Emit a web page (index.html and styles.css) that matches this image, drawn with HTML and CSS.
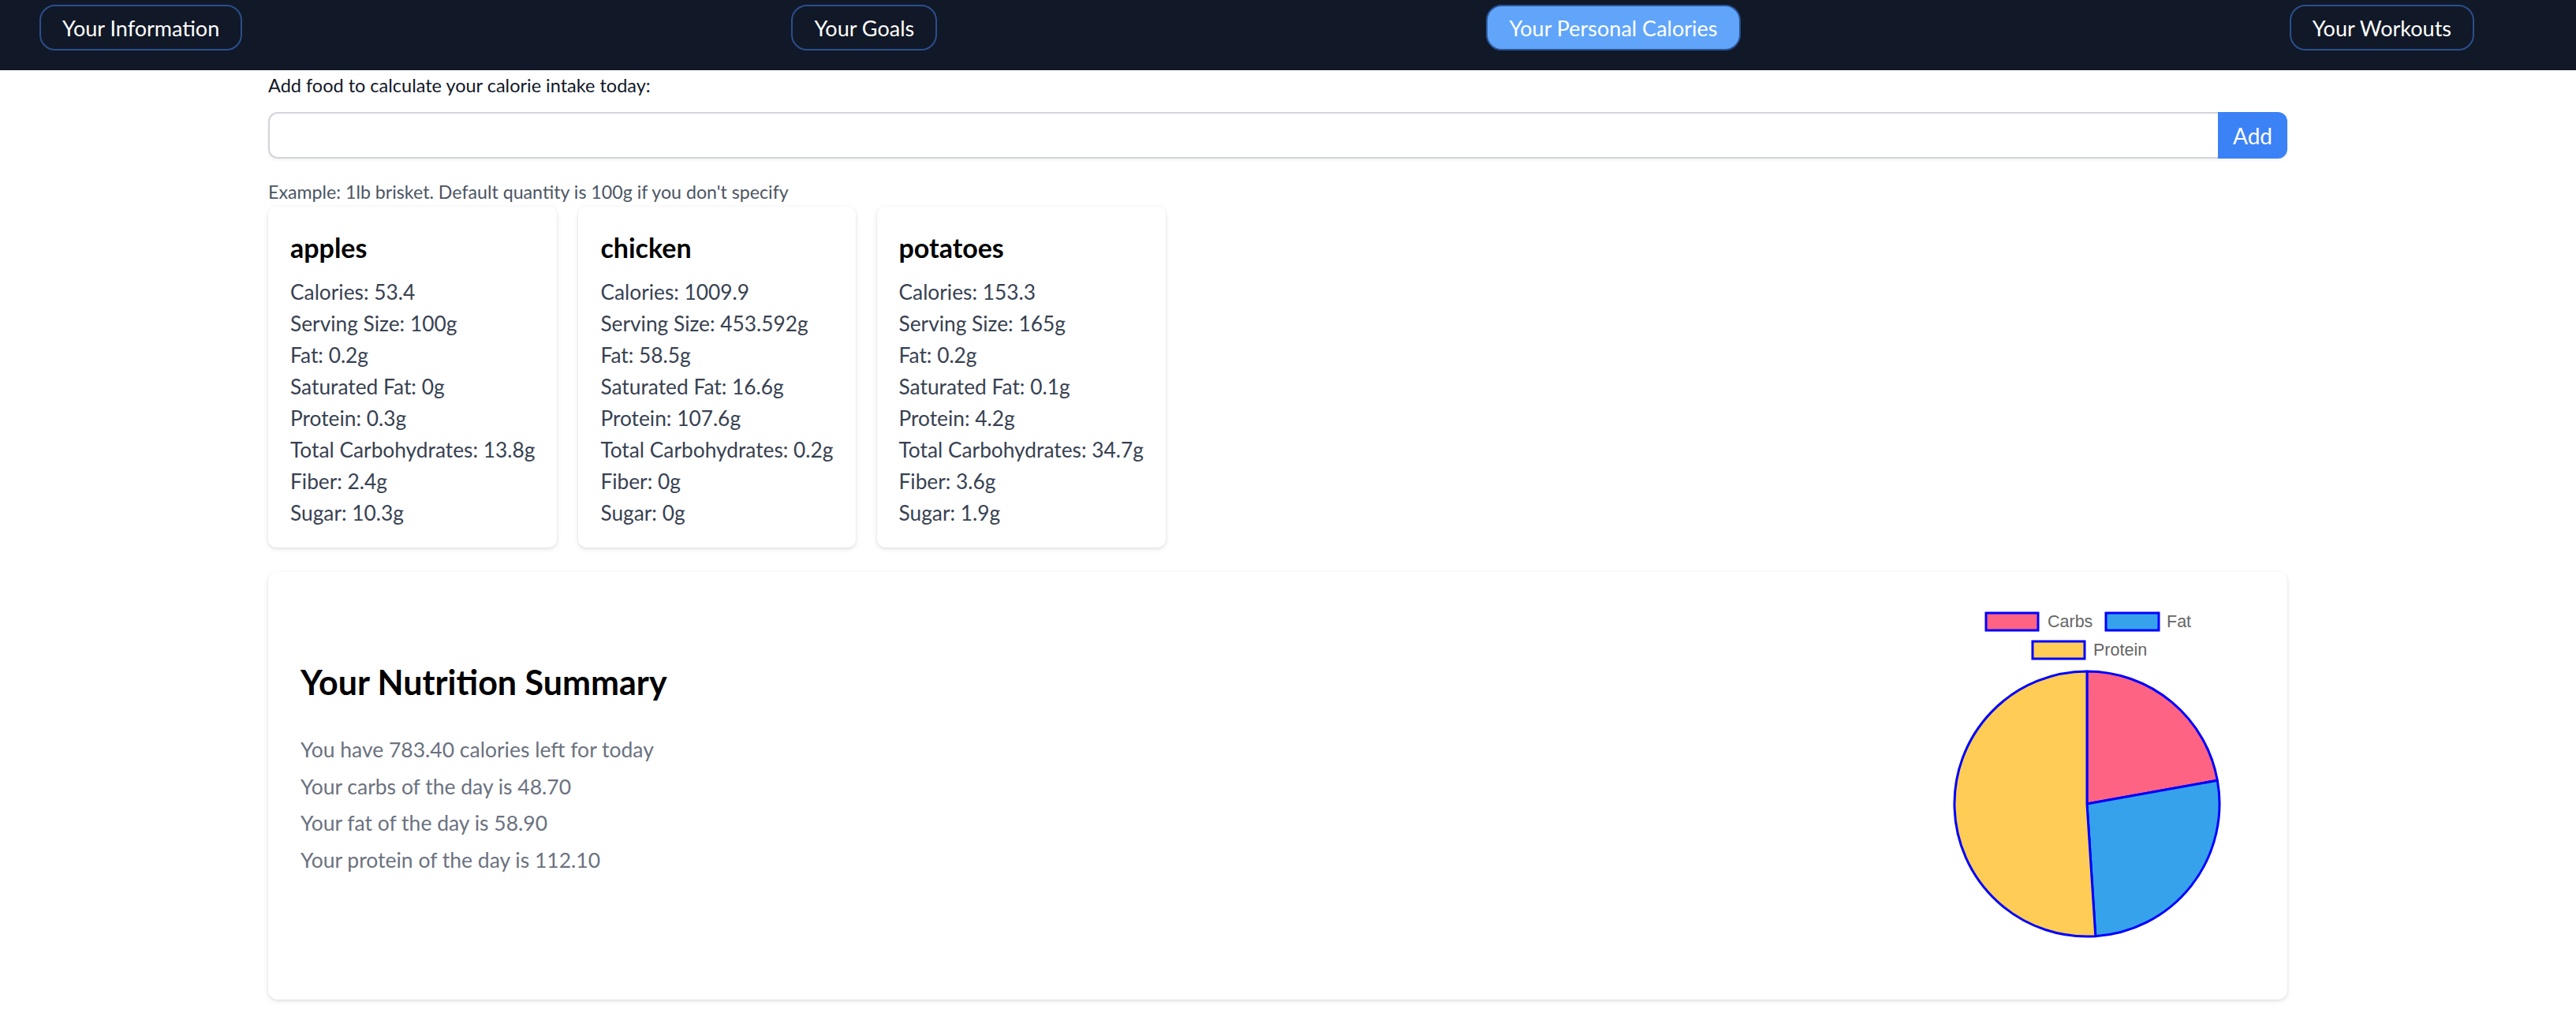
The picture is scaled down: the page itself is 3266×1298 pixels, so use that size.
FILE: index.html
```html
<!DOCTYPE html>
<html lang="en">
<head>
<meta charset="utf-8">
<title>Your Personal Calories</title>
<link rel="stylesheet" href="styles.css">
</head>
<body>
<nav class="topnav">
  <a class="nav-btn">Your Information</a>
  <a class="nav-btn">Your Goals</a>
  <a class="nav-btn active">Your Personal Calories</a>
  <a class="nav-btn">Your Workouts</a>
</nav>
<main class="page">
  <p class="add-label">Add food to calculate your calorie intake today:</p>
  <form class="add-form">
    <input class="food-input" type="text">
    <button class="add-btn" type="button">Add</button>
  </form>
  <p class="hint">Example: 1lb brisket. Default quantity is 100g if you don't specify</p>
  <div class="food-list">
    <div class="food-card">
      <h3 class="food-title">apples</h3>
      <p class="food-line">Calories: 53.4</p>
      <p class="food-line">Serving Size: 100g</p>
      <p class="food-line">Fat: 0.2g</p>
      <p class="food-line">Saturated Fat: 0g</p>
      <p class="food-line">Protein: 0.3g</p>
      <p class="food-line">Total Carbohydrates: 13.8g</p>
      <p class="food-line">Fiber: 2.4g</p>
      <p class="food-line">Sugar: 10.3g</p>
    </div>
    <div class="food-card">
      <h3 class="food-title">chicken</h3>
      <p class="food-line">Calories: 1009.9</p>
      <p class="food-line">Serving Size: 453.592g</p>
      <p class="food-line">Fat: 58.5g</p>
      <p class="food-line">Saturated Fat: 16.6g</p>
      <p class="food-line">Protein: 107.6g</p>
      <p class="food-line">Total Carbohydrates: 0.2g</p>
      <p class="food-line">Fiber: 0g</p>
      <p class="food-line">Sugar: 0g</p>
    </div>
    <div class="food-card">
      <h3 class="food-title">potatoes</h3>
      <p class="food-line">Calories: 153.3</p>
      <p class="food-line">Serving Size: 165g</p>
      <p class="food-line">Fat: 0.2g</p>
      <p class="food-line">Saturated Fat: 0.1g</p>
      <p class="food-line">Protein: 4.2g</p>
      <p class="food-line">Total Carbohydrates: 34.7g</p>
      <p class="food-line">Fiber: 3.6g</p>
      <p class="food-line">Sugar: 1.9g</p>
    </div>
  </div>
  <section class="summary">
    <div class="summary-text">
      <h2 class="summary-title">Your Nutrition Summary</h2>
      <p class="summary-line">You have 783.40 calories left for today</p>
      <p class="summary-line">Your carbs of the day is 48.70</p>
      <p class="summary-line">Your fat of the day is 58.90</p>
      <p class="summary-line">Your protein of the day is 112.10</p>
    </div>
    <svg class="chart" width="420" height="462" viewBox="0 0 420 462">
      <g class="legend">
        <rect x="82" y="12" width="66" height="22" fill="#ff6384" stroke="#0000ff" stroke-width="3"/>
        <text x="160" y="30">Carbs</text>
        <rect x="234" y="12" width="67" height="22" fill="#36a2eb" stroke="#0000ff" stroke-width="3"/>
        <text x="311" y="30">Fat</text>
        <rect x="141" y="48" width="66" height="22" fill="#ffcd56" stroke="#0000ff" stroke-width="3"/>
        <text x="218" y="66">Protein</text>
      </g>
      <g stroke="#0000ff" stroke-width="3" stroke-linejoin="round">
        <path d="M210 254 L210 86 A168 168 0 0 1 375.35 224.25 Z" fill="#ff6384"/>
        <path d="M210 254 L375.35 224.25 A168 168 0 0 1 220.81 421.65 Z" fill="#36a2eb"/>
        <path d="M210 254 L220.81 421.65 A168 168 0 1 1 210 86 Z" fill="#ffcd56"/>
      </g>
    </svg>
  </section>
</main>
</body>
</html>
```
FILE: styles.css
```css
body {
  margin: 0;
  background: #ffffff;
  font-family: "Lato", "Noto Sans", sans-serif;
  color: #111827;
}

.topnav {
  display: flex;
  justify-content: space-between;
  align-items: flex-start;
  height: 89px;
  box-sizing: border-box;
  padding: 6px 129px 0 50px;
  background: #111827;
}

.nav-btn {
  display: flex;
  align-items: center;
  height: 58px;
  box-sizing: border-box;
  padding: 0 27px;
  border: 2px solid #2b4f8c;
  border-radius: 20px;
  color: #ffffff;
  font-size: 27px;
  cursor: pointer;
}

.nav-btn.active {
  background: #60a5fa;
  border-color: #2a5597;
}

.page {
  width: 2560px;
  margin-left: 340px;
  padding-bottom: 30px;
}

.add-label {
  margin: 3px 0 0;
  font-size: 23.5px;
  line-height: 32px;
  color: #111827;
}

.add-form {
  display: flex;
  height: 59px;
  margin-top: 18px;
  border-radius: 12px;
  box-shadow: 0 2px 4px rgba(0, 0, 0, 0.06);
}

.food-input {
  flex: 1;
  box-sizing: border-box;
  height: 59px;
  margin: 0;
  border: 2px solid #d1d5db;
  border-right: none;
  border-radius: 12px 0 0 12px;
  font-size: 28px;
  outline: none;
}

.add-btn {
  width: 88px;
  height: 59px;
  border: 0;
  border-radius: 0 12px 12px 0;
  background: #3b82f6;
  color: #ffffff;
  font-family: inherit;
  font-size: 28px;
}

.hint {
  margin: 26px 0 0;
  font-size: 23.2px;
  line-height: 32px;
  color: #4b5563;
}

.food-list {
  display: flex;
  gap: 27px;
  margin-top: 3px;
}

.food-card {
  padding: 32px 28px 24px;
  border-radius: 10px;
  background: #ffffff;
  box-shadow: 0 2px 6px rgba(0, 0, 0, 0.1), 0 1px 3px rgba(0, 0, 0, 0.06);
}

.food-title {
  margin: 0 0 16px;
  font-size: 34px;
  line-height: 40px;
  font-weight: 700;
  color: #000000;
}

.food-line {
  margin: 0;
  font-size: 26.3px;
  line-height: 40px;
  color: #374151;
}

.summary {
  display: flex;
  justify-content: space-between;
  align-items: center;
  height: 542px;
  box-sizing: border-box;
  margin-top: 31px;
  padding: 0 44px 0 41px;
  border-radius: 12px;
  background: #ffffff;
  box-shadow: 0 2px 6px rgba(0, 0, 0, 0.1), 0 1px 3px rgba(0, 0, 0, 0.06);
}

.summary-text {
  margin-bottom: 42px;
}

.summary-title {
  margin: 0 0 34px;
  font-size: 43px;
  line-height: 56px;
  font-weight: 700;
  color: #000000;
}

.summary-line {
  margin: 0;
  font-size: 26.5px;
  line-height: 46.5px;
  color: #6b7280;
}

.chart {
  display: block;
}

.legend text {
  font-family: "Liberation Sans", Arial, sans-serif;
  font-size: 21.5px;
  fill: #666666;
}
```
